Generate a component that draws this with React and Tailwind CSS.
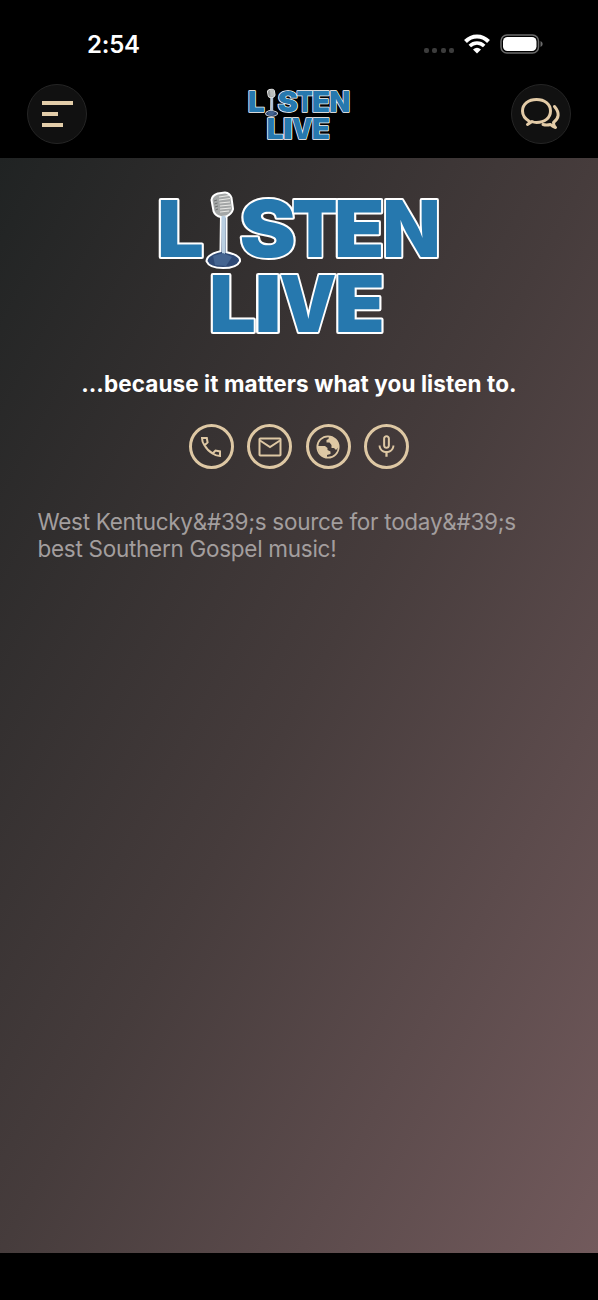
import React from 'react';
import { MdMicNone } from 'react-icons/md';

const letters = [
  { char: 'L', x: 157, y: 257, width: 47 },
  { char: 'S', x: 239.5, y: 257, width: 56.5 },
  { char: 'T', x: 292, y: 257, width: 46 },
  { char: 'E', x: 334, y: 257, width: 50.5 },
  { char: 'N', x: 382.5, y: 257, width: 58 },
  { char: 'L', x: 209, y: 332, width: 47 },
  { char: 'I', x: 254, y: 332, width: 28 },
  { char: 'V', x: 279.5, y: 332, width: 57 },
  { char: 'E', x: 334.5, y: 332, width: 50.5 },
];

const Logo = ({ className }) => (
  <svg viewBox="158 190 282 146" className={`overflow-visible ${className}`} role="img" aria-label="Listen Live">
    <g
      fontFamily="Inter, sans-serif"
      fontWeight="900"
      fontSize="78.5"
      fill="#2678ae"
      stroke="#fff"
      strokeWidth="4"
      strokeLinejoin="round"
      paintOrder="stroke"
    >
      {letters.map(({ char, x, y, width }, i) => (
        <text key={i} x={x} y={y} textLength={width} lengthAdjust="spacingAndGlyphs">
          {char}
        </text>
      ))}
    </g>

    {/* Microphone */}
    <g stroke="#fff" strokeWidth="4" strokeLinejoin="round" paintOrder="stroke">
      <path d="M222 214L225.500 214L225.500 253Q240 256 239 261Q236 267 223 267Q210 267 207.500 261Q208 255 221.500 252Z" fill="#2f4a76" />
      <path d="M212.500 200Q213 196 218 194.500L225 193.500Q229 194 230.500 198L232 209Q231 213 226 215.500L221 216Q216 215 214.500 211Z" fill="#a3a6a6" />
    </g>
    <path d="M221.500 216H225.500L225 254H222Z" fill="#b9cfe2" />
    <path d="M213 256L223 253L232 257L226 266L215 265Z" fill="#446490" />
    <path d="M219 197L229 195.500M219 200L230 198.500M219.500 203L230 202M220 206L231 205M220 209L231 208M220 212L229 211" stroke="#e8e8e5" strokeWidth="1.200" />
    <path d="M214 201L217 200M214.500 204L217.500 203M215 207L218 206M215.500 210L218 209" stroke="#6d7070" strokeWidth="1" />
  </svg>
);

const PhoneIcon = () => (
  <svg viewBox="0 0 22 22" className="size-[22px]" fill="none" stroke="currentColor" strokeWidth="2" strokeLinejoin="miter">
    <path d="M2 2H6.800L7.600 6.500L4.500 9.300Q2 6 2 2ZM4.500 9.300Q7.500 14.800 12.700 17.500L15.500 14.500L20 15.400V20Q16 20 12.700 17.500" />
  </svg>
);

const MailIcon = () => (
  <svg viewBox="0 0 24 20" className="h-5 w-6" fill="none" stroke="currentColor" strokeWidth="2">
    <rect x="1.500" y="1.500" width="21" height="17" rx="0.800" />
    <path d="M2 3.500L12 10L22 3.500" />
  </svg>
);

const GlobeIcon = ({ className }) => (
  <svg viewBox="0 0 24 24" className={className} fill="currentColor">
    <circle cx="12" cy="12" r="10.700" fill="none" stroke="currentColor" strokeWidth="1.700" />
    <path d="M1.500 11H9L11.500 13V15L14.500 16.500V19L11 20V23Q3 22 1.500 11Z" />
    <path d="M13 1.500L12.500 4L10.500 5V7.500H13.500L15.500 10V13H18L20 15L22.500 12Q22 3 13 1.500Z" />
  </svg>
);

const ChatIcon = () => (
  <svg viewBox="0 0 42 34" className="h-[34px] w-[42px]" fill="none" stroke="#e3cba7" strokeWidth="3" strokeLinejoin="round" strokeLinecap="round">
    <path d="M9.500 24.500C4.500 21.500 2.500 18 2.500 14C2.500 7 8.500 2.500 16.500 2.500C24.500 2.500 30.500 7 30.500 14C30.500 21 24.500 25.500 16.500 25.500C14.500 25.500 13 25 12 24.500L7.500 27.500Q9.500 26.500 9.500 24.500Z" />
    <path d="M34.500 9.500C40 16 39 21.500 33.500 25.500Q33.500 28.500 35.500 30.500Q32.500 29.500 30.500 27.500Q26.500 28.500 23 27.500" />
  </svg>
);

const StatusBar = () => (
  <div className="flex h-20 items-start justify-between pl-[87px] pr-[55px] pt-[31px]">
    <span className="text-[24px] font-semibold leading-7 tracking-[-0.2px]">2:54</span>
    <div className="flex items-center pt-[3px]">
      <div className="mr-[9px] mt-[13px] flex gap-[3.500px]">
        <span className="size-[5px] rounded-[2px] bg-[#3c3c3c]" />
        <span className="size-[5px] rounded-[2px] bg-[#3c3c3c]" />
        <span className="size-[5px] rounded-[2px] bg-[#3c3c3c]" />
        <span className="size-[5px] rounded-[2px] bg-[#3c3c3c]" />
      </div>
      <svg viewBox="0 0 28 20" className="mr-[9px] h-5 w-7" fill="none" stroke="#fff">
        <path d="M2.500 7.500C9 .800 19 .800 25.500 7.500" strokeWidth="4" />
        <path d="M6.800 12C11 8 17 8 21.200 12" strokeWidth="3.600" />
        <path d="M10 15.600Q14 12 18 15.600L14 19.500Z" fill="#fff" stroke="none" />
      </svg>
      <svg viewBox="0 0 43 20" className="h-5 w-[43px]">
        <rect x="1" y="1" width="37.500" height="18" rx="6" fill="none" stroke="#6b6b6b" strokeWidth="1.500" />
        <rect x="3" y="3" width="33.500" height="14" rx="4.500" fill="#fff" />
        <path d="M40.500 7Q42.700 8 42.700 10T40.500 13Z" fill="#6b6b6b" />
      </svg>
    </div>
  </div>
);

const ContactButton = ({ label, children }) => (
  <button
    aria-label={label}
    className="flex size-[45px] items-center justify-center rounded-full border-3 border-[#dec8a4] text-[#dec8a4]"
  >
    {children}
  </button>
);

const App = () => {
  return (
    <div className="flex h-[1300px] w-[598px] flex-col bg-black font-['Inter',sans-serif] text-white">
      <StatusBar />

      <header className="flex h-[78px] items-start justify-between px-[27px] pt-1">
        <button aria-label="Menu" className="flex size-[60px] flex-col justify-center gap-[7px] rounded-full border border-[#252525] bg-[#111] pl-[14px]">
          <span className="h-1 w-[31px] bg-[#e3cda9]" />
          <span className="h-1 w-4 bg-[#e3cda9]" />
          <span className="h-1 w-[21px] bg-[#e3cda9]" />
        </button>
        <Logo className="mt-1 h-[53px] w-[102px]" />
        <button aria-label="Chat" className="flex size-[60px] items-center justify-center rounded-full border border-[#252525] bg-[#111]">
          <ChatIcon />
        </button>
      </header>

      <main className="flex h-[1095px] flex-col items-center bg-linear-to-br/srgb from-[#202323] via-[#463c3c] to-[#725a5c] pt-8">
        <Logo className="h-[146px] w-[282px]" />
        <h1 className="mt-[33px] whitespace-nowrap text-[22.500px] font-bold leading-[30px] tracking-[0.080px]">
          …because it matters what you listen to.
        </h1>
        <div className="mt-[25px] flex gap-[13.500px]">
          <ContactButton label="Call">
            <PhoneIcon />
          </ContactButton>
          <ContactButton label="Email">
            <MailIcon />
          </ContactButton>
          <ContactButton label="Website">
            <GlobeIcon className="size-6" />
          </ContactButton>
          <ContactButton label="Record">
            <MdMicNone size={27} />
          </ContactButton>
        </div>
        <p className="mt-[38.500px] w-full whitespace-nowrap pl-[37.500px] text-[22.500px] leading-[27.500px] tracking-[-0.280px] text-[#a39e9e]">
          West Kentucky&amp;#39;s source for today&amp;#39;s
          <br />
          best Southern Gospel music!
        </p>
      </main>
    </div>
  );
};

export default App;
